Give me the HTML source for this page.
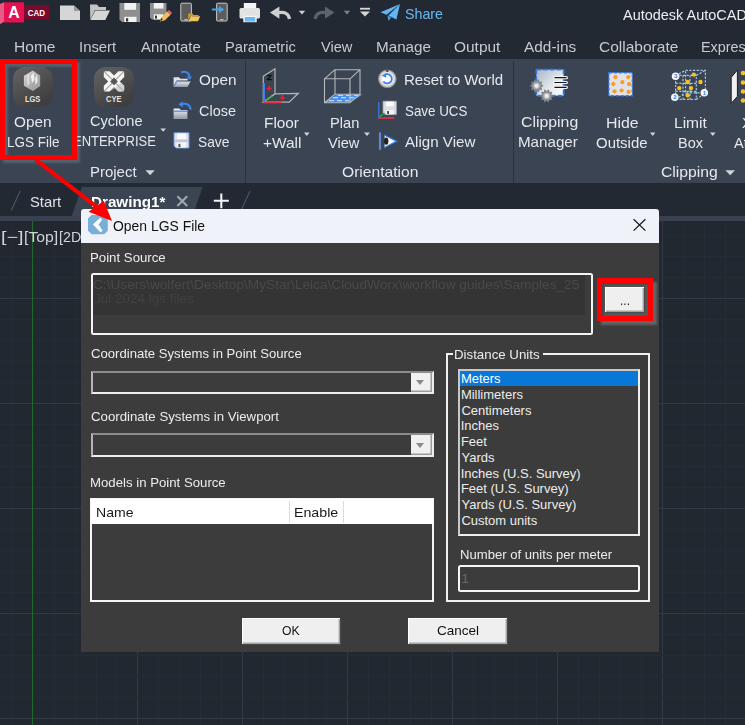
<!DOCTYPE html>
<html><head><meta charset="utf-8"><title>Open LGS File</title>
<style>
*{box-sizing:border-box;margin:0;padding:0}
html,body{width:745px;height:725px;overflow:hidden;background:#212830;font-family:"Liberation Sans",sans-serif}
#root{position:relative;width:745px;height:725px;overflow:hidden;background:#212830}
.abs{position:absolute}
.t{position:absolute;white-space:nowrap;line-height:1;transform-origin:0 0}
svg{position:absolute;left:0;top:0;overflow:visible}
.lab{font-size:13px;color:#ececec}
.btn{position:absolute;background:#efefef;box-shadow:inset 1px 1px 0 #fff, inset -1.4px -1.4px 0 #a4a4a4, 1px 1px 0 #4a4a4a}
</style></head><body><div id="root">

<!-- drawing canvas -->
<div class="abs" style="left:0;top:221px;width:745px;height:504px;background:#212830"></div>
<div class="abs" style="left:12px;top:221px;width:1px;height:504px;background:#252c36"></div>
<div class="abs" style="left:54px;top:221px;width:1px;height:504px;background:#252c36"></div>
<div class="abs" style="left:75px;top:221px;width:1px;height:504px;background:#252c36"></div>
<div class="abs" style="left:96px;top:221px;width:1px;height:504px;background:#252c36"></div>
<div class="abs" style="left:116px;top:221px;width:1px;height:504px;background:#252c36"></div>
<div class="abs" style="left:137px;top:221px;width:1px;height:504px;background:#323a47"></div>
<div class="abs" style="left:158px;top:221px;width:1px;height:504px;background:#252c36"></div>
<div class="abs" style="left:179px;top:221px;width:1px;height:504px;background:#252c36"></div>
<div class="abs" style="left:200px;top:221px;width:1px;height:504px;background:#252c36"></div>
<div class="abs" style="left:221px;top:221px;width:1px;height:504px;background:#252c36"></div>
<div class="abs" style="left:242px;top:221px;width:1px;height:504px;background:#323a47"></div>
<div class="abs" style="left:263px;top:221px;width:1px;height:504px;background:#252c36"></div>
<div class="abs" style="left:284px;top:221px;width:1px;height:504px;background:#252c36"></div>
<div class="abs" style="left:305px;top:221px;width:1px;height:504px;background:#252c36"></div>
<div class="abs" style="left:326px;top:221px;width:1px;height:504px;background:#252c36"></div>
<div class="abs" style="left:347px;top:221px;width:1px;height:504px;background:#323a47"></div>
<div class="abs" style="left:368px;top:221px;width:1px;height:504px;background:#252c36"></div>
<div class="abs" style="left:389px;top:221px;width:1px;height:504px;background:#252c36"></div>
<div class="abs" style="left:410px;top:221px;width:1px;height:504px;background:#252c36"></div>
<div class="abs" style="left:431px;top:221px;width:1px;height:504px;background:#252c36"></div>
<div class="abs" style="left:452px;top:221px;width:1px;height:504px;background:#323a47"></div>
<div class="abs" style="left:473px;top:221px;width:1px;height:504px;background:#252c36"></div>
<div class="abs" style="left:494px;top:221px;width:1px;height:504px;background:#252c36"></div>
<div class="abs" style="left:515px;top:221px;width:1px;height:504px;background:#252c36"></div>
<div class="abs" style="left:536px;top:221px;width:1px;height:504px;background:#252c36"></div>
<div class="abs" style="left:557px;top:221px;width:1px;height:504px;background:#323a47"></div>
<div class="abs" style="left:578px;top:221px;width:1px;height:504px;background:#252c36"></div>
<div class="abs" style="left:599px;top:221px;width:1px;height:504px;background:#252c36"></div>
<div class="abs" style="left:620px;top:221px;width:1px;height:504px;background:#252c36"></div>
<div class="abs" style="left:641px;top:221px;width:1px;height:504px;background:#252c36"></div>
<div class="abs" style="left:662px;top:221px;width:1px;height:504px;background:#323a47"></div>
<div class="abs" style="left:683px;top:221px;width:1px;height:504px;background:#252c36"></div>
<div class="abs" style="left:704px;top:221px;width:1px;height:504px;background:#252c36"></div>
<div class="abs" style="left:725px;top:221px;width:1px;height:504px;background:#252c36"></div>
<div class="abs" style="left:0;top:235px;width:745px;height:1px;background:#252c36"></div>
<div class="abs" style="left:0;top:256px;width:745px;height:1px;background:#252c36"></div>
<div class="abs" style="left:0;top:277px;width:745px;height:1px;background:#252c36"></div>
<div class="abs" style="left:0;top:298px;width:745px;height:1px;background:#323a47"></div>
<div class="abs" style="left:0;top:319px;width:745px;height:1px;background:#252c36"></div>
<div class="abs" style="left:0;top:340px;width:745px;height:1px;background:#252c36"></div>
<div class="abs" style="left:0;top:361px;width:745px;height:1px;background:#252c36"></div>
<div class="abs" style="left:0;top:382px;width:745px;height:1px;background:#252c36"></div>
<div class="abs" style="left:0;top:403px;width:745px;height:1px;background:#323a47"></div>
<div class="abs" style="left:0;top:424px;width:745px;height:1px;background:#252c36"></div>
<div class="abs" style="left:0;top:445px;width:745px;height:1px;background:#252c36"></div>
<div class="abs" style="left:0;top:466px;width:745px;height:1px;background:#252c36"></div>
<div class="abs" style="left:0;top:487px;width:745px;height:1px;background:#252c36"></div>
<div class="abs" style="left:0;top:508px;width:745px;height:1px;background:#323a47"></div>
<div class="abs" style="left:0;top:529px;width:745px;height:1px;background:#252c36"></div>
<div class="abs" style="left:0;top:550px;width:745px;height:1px;background:#252c36"></div>
<div class="abs" style="left:0;top:571px;width:745px;height:1px;background:#252c36"></div>
<div class="abs" style="left:0;top:592px;width:745px;height:1px;background:#252c36"></div>
<div class="abs" style="left:0;top:613px;width:745px;height:1px;background:#323a47"></div>
<div class="abs" style="left:0;top:634px;width:745px;height:1px;background:#252c36"></div>
<div class="abs" style="left:0;top:655px;width:745px;height:1px;background:#252c36"></div>
<div class="abs" style="left:0;top:676px;width:745px;height:1px;background:#252c36"></div>
<div class="abs" style="left:0;top:697px;width:745px;height:1px;background:#252c36"></div>
<div class="abs" style="left:0;top:718px;width:745px;height:1px;background:#323a47"></div>
<div class="abs" style="left:32px;top:221px;width:1px;height:504px;background:#1f6a2b"></div>

<!-- title + menu bar -->
<div class="abs" style="left:0;top:0;width:745px;height:59px;background:#222933"></div>
<!-- ribbon -->
<div class="abs" style="left:0;top:59px;width:745px;height:123.8px;background:#3b4453"></div>
<div class="abs" style="left:0;top:183px;width:745px;height:4px;background:#222933"></div>
<div class="abs" style="left:0;top:187px;width:745px;height:29px;background:#222933"></div>
<div class="abs" style="left:0;top:216px;width:745px;height:5px;background:#394150"></div>
<div class="abs" style="left:245px;top:61px;width:1px;height:122px;background:#2a313c"></div>
<div class="abs" style="left:513px;top:61px;width:1px;height:122px;background:#2a313c"></div>

<svg width="745" height="725" viewBox="0 0 745 725">
<defs>
<linearGradient id="gApp" x1="0" y1="0" x2="0.6" y2="1"><stop offset="0" stop-color="#646464"/><stop offset="1" stop-color="#3e3e3e"/></linearGradient>
<linearGradient id="gCube" x1="0" y1="0" x2="1" y2="1"><stop offset="0" stop-color="#dcdcdc"/><stop offset="1" stop-color="#8c8c8c"/></linearGradient>
<linearGradient id="gFold" x1="0" y1="0" x2="0" y2="1"><stop offset="0" stop-color="#f4f6f8"/><stop offset="1" stop-color="#8d98a8"/></linearGradient>
<linearGradient id="gClip" x1="0" y1="0" x2="1" y2="1"><stop offset="0" stop-color="#a9b6c4"/><stop offset="0.6" stop-color="#e4e9ee"/><stop offset="1" stop-color="#ffffff"/></linearGradient>
<radialGradient id="gRing" cx="0.5" cy="0.5" r="0.5"><stop offset="0.45" stop-color="#ffffff"/><stop offset="0.8" stop-color="#d6d6d6"/><stop offset="1" stop-color="#a8a8a8"/></radialGradient>
<filter id="soft" x="-10%" y="-10%" width="120%" height="120%"><feGaussianBlur stdDeviation="0.35"/></filter>
</defs>
<polygon points="0,4 4,2.3 4,21.8 0,24.2" fill="#e85a88"/>
<rect x="4" y="2.3" width="20" height="20.2" fill="#e5104f"/>
<rect x="24" y="5" width="25" height="14.7" fill="#780a2c"/>
<text x="14" y="17.9" font-family="Liberation Sans, sans-serif" font-weight="bold" font-size="15.8" fill="#fff" text-anchor="middle">A</text>
<text x="36.4" y="15.7" font-family="Liberation Sans, sans-serif" font-weight="bold" font-size="8.9" fill="#fff" text-anchor="middle" textLength="17.2" lengthAdjust="spacingAndGlyphs">CAD</text>
<polygon points="60,5.5 74,5.5 80,11 80,20 60,20" fill="#d6d6d6"/><polygon points="74,5.5 74,11 80,11" fill="#9a9a9a"/>
<polygon points="90,4.5 97,4.5 99,7 106,7 106,10 95,10 90.3,19.5" fill="#c4c4c4"/><polygon points="95.3,10.5 110,10.5 105.3,20 90.3,20" fill="#d6d6d6"/>
<path d="M119.5 3H140V22H122L119.5 19.5Z" fill="#8f8f8f"/><rect x="124.3" y="3" width="11.8" height="6.8" fill="#f2f2f2"/><rect x="124.3" y="16.8" width="12.2" height="5.2" fill="#f2f2f2"/><rect x="126" y="18.2" width="2.2" height="3.3" fill="#333"/>
<path d="M150 3H166.5V19.5H152L150 17.5Z" fill="#8f8f8f"/><rect x="153.8" y="3" width="9.7" height="5.6" fill="#f2f2f2"/><rect x="153.8" y="14.3" width="9.5" height="5.2" fill="#f2f2f2"/><rect x="155" y="15.6" width="2" height="3" fill="#333"/>
<polygon points="160,21.6 161.2,17.6 167.2,11.6 170.6,14.8 164.4,20.6" fill="#f0c060"/><polygon points="167.2,11.6 169,9.9 172,12.8 170.6,14.8" fill="#ee6070"/><polygon points="160,21.6 161.2,17.6 163,19.8" fill="#444"/>
<rect x="180.8" y="3.2" width="10.6" height="17.8" rx="1" fill="#5c5c5c" stroke="#c9c9c9" stroke-width="1"/><rect x="184.5" y="19.2" width="3" height="1" fill="#ddd"/>
<polygon points="188.2,13.5 192.5,13.5 193.5,15 198.5,15 198.5,16 190.5,16 188.2,20.5" fill="#c89a30"/><polygon points="191,16.2 200.2,16.2 198,21.2 188.5,21.2" fill="#f2c45a"/>
<rect x="216.6" y="3.2" width="10.6" height="17.8" rx="1" fill="#5c5c5c" stroke="#c9c9c9" stroke-width="1"/><rect x="220.3" y="19.2" width="3" height="1" fill="#ddd"/>
<path d="M211.8 8.6H219V6L224.2 9.6L219 13.2V10.6H211.8Z" fill="#3ea4ee"/>
<rect x="243.8" y="3" width="12.4" height="6" fill="#f4f4f4"/><rect x="239.5" y="8" width="20.5" height="10.5" rx="1.5" fill="#e2e2e2"/><rect x="243.3" y="15.8" width="13.4" height="6.4" fill="#f4f4f4"/><rect x="244.8" y="17" width="10.4" height="4.6" fill="#6bb8f2"/>
<polygon points="270,12.6 279.4,6.4 279.4,18.8" fill="#cfcfcf"/><path d="M279 12.6 C285 11.6 289 14 289.4 19" stroke="#cfcfcf" stroke-width="3.2" fill="none"/>
<polygon points="298.8,10.8 305.2,10.8 302,14.4" fill="#cfcfcf"/>
<polygon points="334.4,12.6 325,6.4 325,18.8" fill="#5c636d"/><path d="M325.4 12.6 C319.4 11.6 315.6 14 315.2 19" stroke="#5c636d" stroke-width="3.2" fill="none"/>
<polygon points="343.8,10.8 350.2,10.8 347,14.4" fill="#7d838c"/>
<rect x="360" y="7.8" width="10" height="1.8" fill="#d6d6d6"/><polygon points="360,11.4 370,11.4 365,16.6" fill="#d6d6d6"/>
<polygon points="380.5,12.2 400,4 386.6,14.8" fill="#62b5f5"/><polygon points="400,4 388.4,15.6 396.4,19.4" fill="#62b5f5"/><polygon points="387.4,15.6 388.6,21 391.2,17.2" fill="#4a9be0"/>
<rect x="13" y="67" width="40" height="40" rx="12" fill="url(#gApp)"/>
<g filter="url(#soft)"><polygon points="32.8,70.6 40.1,75.4 40.1,86.1 32.8,91 23.9,85.8 23.9,75.8" fill="url(#gCube)"/></g>
<g filter="url(#soft)"><polygon points="32.8,79.5 40.1,75.4 40.1,86.1 32.8,91" fill="#a8a8a8" opacity=".75"/><polygon points="31,76 33.5,72.5 34.5,80 32,83" fill="#fff" opacity=".8"/><polygon points="35,78 37.2,74.8 37.6,82 35.4,85" fill="#fff" opacity=".75"/><polygon points="27,76 29,73.4 29.6,84 27.4,86" fill="#eee" opacity=".6"/></g>
<text x="32.6" y="101.9" font-family="Liberation Sans, sans-serif" font-weight="bold" font-size="8.5" fill="#e4e4e4" text-anchor="middle" textLength="15.4" lengthAdjust="spacingAndGlyphs">LGS</text>
<rect x="94" y="67" width="40" height="40" rx="12" fill="url(#gApp)"/>
<g filter="url(#soft)"><path d="M105.3 71.2H109.6L114 75.6L118.4 71.2H122.7Q124.2 71.2 124.2 72.7V77L119.8 81.4L124.2 85.8V90.1Q124.2 91.6 122.7 91.6H118.4L114 87.2L109.6 91.6H105.3Q103.8 91.6 103.8 90.1V85.8L108.2 81.4L103.8 77V72.7Q103.8 71.2 105.3 71.2Z" fill="#f4f4f4"/>
<path d="M104.4 71.8L123.6 91M123.6 71.8L104.4 91" stroke="#6a6a6a" stroke-width="0.9"/><polygon points="114,77.6 117.8,81.4 114,85.2 110.2,81.4" fill="#575757"/>
<polygon points="109.6,91.6 114,87.2 118.4,91.6 122.7,91.6 124.2,90.1 124.2,85.8 121,82.6 114,89 " fill="#b9b9b9" opacity=".55"/></g>
<text x="113.7" y="101.9" font-family="Liberation Sans, sans-serif" font-weight="bold" font-size="8.5" fill="#e4e4e4" text-anchor="middle" textLength="15.4" lengthAdjust="spacingAndGlyphs">CYE</text>
<polygon points="173.6,77.2 179,77.2 180.4,78.8 187.6,78.8 187.6,80.6 176.4,80.6 173.6,86.6" fill="#dfe3e8"/><polygon points="176.6,81 190.6,81 187.6,87 173.6,87" fill="url(#gFold)"/><path d="M174.2 86.2L177 81.6H190" stroke="#4a88e0" stroke-width="0.9" fill="none"/>
<path d="M181 72.4C185.5 70.6 189.2 72.6 189.4 76.6" stroke="#3d86ee" stroke-width="2" fill="none"/><polygon points="186.4,76.4 192.2,76.4 189.4,80" fill="#3d86ee"/>
<polygon points="173.6,108.4 179.4,108.4 180.8,110 187.4,110 187.4,119 173.6,119" fill="url(#gFold)"/><rect x="173.6" y="110.6" width="13.8" height="1.2" fill="#4a88e0"/>
<path d="M190.6 109.6C190.2 104.6 186 102.6 181.4 104.2" stroke="#3d86ee" stroke-width="2" fill="none"/><polygon points="182.8,101 182.8,107.6 178.4,104.6" fill="#3d86ee"/>
<path d="M174 132.8H189V148H176L174 146Z" fill="#dfe4ec" stroke="#6f93d6" stroke-width="1"/><rect x="177.2" y="133.4" width="8.8" height="5.6" fill="#fbfbfb"/><rect x="177" y="142.6" width="9" height="5" fill="#f6f6f6"/><rect x="178.4" y="143.8" width="2" height="3.4" fill="#555"/><rect x="175" y="139.6" width="13" height="2.4" fill="#c3c9d4"/>
<polygon points="263.3,76.3 275,68.8 275,93.8 263.3,102.2" fill="none" stroke="#b4b4b4" stroke-width="1.2"/><polygon points="275,93.8 298.3,93.3 289.2,102.2 263.3,102.2" fill="none" stroke="#b4b4b4" stroke-width="1.2"/>
<line x1="264.1" y1="83" x2="264.1" y2="102.2" stroke="#3b7df0" stroke-width="1.8"/><line x1="263.3" y1="102.5" x2="281.7" y2="102.5" stroke="#e8323c" stroke-width="1.7"/><line x1="265.4" y1="100.8" x2="272.5" y2="96" stroke="#2db34a" stroke-width="1.5"/>
<path d="M266.6 88.5H271.8M269.2 85.9V91.1M279.9 97.7H285.1M282.5 95.1V100.3" stroke="#ee1c2e" stroke-width="1.5"/>
<text x="266.8" y="79.8" font-family="Liberation Sans, sans-serif" font-weight="bold" font-size="8" fill="#0c0c0c" stroke="#0c0c0c" stroke-width="0.45">Z</text>
<polygon points="324.3,102.6 350,102.6 362.6,94.6 337,94.6" fill="#4790f2"/>
<path d="M329 100.6H334M337 100.6H342M345 100.6H349M333 97.6H338M341 97.6H346M349 97.6H354M338 95.4H343M346 95.4H351M354 95.4H358" stroke="#b4d6ff" stroke-width="1.1"/>
<path d="M324.5 78.8H350V102.7H324.5ZM335 69.7H360V94.3H335ZM324.5 78.8L335 69.7M350 78.8L360 69.7M350 102.7L360 94.3M324.5 102.7L335 94.3" fill="none" stroke="#b6b8bc" stroke-width="1.1"/>
<circle cx="387.3" cy="78.8" r="9" fill="url(#gRing)"/><circle cx="387.3" cy="78.8" r="8.8" fill="none" stroke="#8e8e8e" stroke-width="0.8"/><rect x="386.3" y="69.6" width="2" height="2.4" fill="#444"/>
<path d="M384.3 75.2A4.6 4.6 0 1 1 383.4 81.4" stroke="#3b82f0" stroke-width="1.8" fill="none"/><polygon points="381.6,75.4 386.4,73.2 386,77.8" fill="#3b82f0"/>
<path d="M383 101.2H396.4V114.6H385L383 112.6Z" fill="#d9dde4" stroke="#9aa2ae" stroke-width="0.8"/><rect x="386" y="101.6" width="7.6" height="4.8" fill="#fafafa"/><rect x="386" y="110" width="7.8" height="4.4" fill="#f4f4f4"/><rect x="387.2" y="111" width="1.8" height="3" fill="#444"/>
<line x1="378.8" y1="102" x2="378.8" y2="118.4" stroke="#3b7df0" stroke-width="1.2"/><line x1="378.4" y1="118" x2="394.4" y2="118" stroke="#e8323c" stroke-width="1.6"/><line x1="379.4" y1="117" x2="384.4" y2="113" stroke="#2db34a" stroke-width="1.2"/>
<line x1="380" y1="132.4" x2="380" y2="149.8" stroke="#5f88cc" stroke-width="2.2"/><polygon points="384.6,135.4 396.4,141.2 384.6,147.4" fill="#fbfbfb"/><path d="M384 134.8L396.6 141.2L384 147.8" stroke="#2f7cf0" stroke-width="1.2" fill="none"/><ellipse cx="386.2" cy="141.2" rx="2.2" ry="3.6" fill="#222"/>
<rect x="536.4" y="69.6" width="27.2" height="26" fill="url(#gClip)" stroke="#2f7cf0" stroke-width="1.8" stroke-dasharray="4.4 2.4"/>
<path d="M554.6 77.7H566.4M554.6 82.5H566.4M554.6 87.3H566.4" stroke="#f4f4f4" stroke-width="3.2" stroke-linecap="round"/><path d="M554.4 77.7H566.6M554.4 82.5H566.6M554.4 87.3H566.6" stroke="#161616" stroke-width="1.2"/>
<g filter="url(#soft)"><polygon points="543.60,85.80 541.26,87.31 542.26,89.91 539.48,89.76 538.76,92.46 536.60,90.70 534.44,92.46 533.72,89.76 530.94,89.91 531.94,87.31 529.60,85.80 531.94,84.29 530.94,81.69 533.72,81.84 534.44,79.14 536.60,80.90 538.76,79.14 539.48,81.84 542.26,81.69 541.26,84.29" fill="#7e8084"/><circle cx="536.6" cy="85.8" r="4.6" fill="#8e9094"/><circle cx="536.6" cy="85.8" r="3.2" fill="#b4b6b8"/><circle cx="536.6" cy="85.8" r="2.1" fill="#ececec"/></g>
<g filter="url(#soft)"><polygon points="553.70,95.90 551.36,97.41 552.36,100.01 549.58,99.86 548.86,102.56 546.70,100.80 544.54,102.56 543.82,99.86 541.04,100.01 542.04,97.41 539.70,95.90 542.04,94.39 541.04,91.79 543.82,91.94 544.54,89.24 546.70,91.00 548.86,89.24 549.58,91.94 552.36,91.79 551.36,94.39" fill="#7e8084"/><circle cx="546.7" cy="95.9" r="4.6" fill="#8e9094"/><circle cx="546.7" cy="95.9" r="3.2" fill="#b4b6b8"/><circle cx="546.7" cy="95.9" r="2.1" fill="#ececec"/></g>
<rect x="608.9" y="72.7" width="23.4" height="23" fill="#dfe2ea" stroke="#2f7cf0" stroke-width="1.4" stroke-dasharray="3 2"/>
<circle cx="615.5" cy="77.1" r="2.1" fill="#ff9a1a"/>
<circle cx="628.3" cy="77.1" r="2.1" fill="#ff9a1a"/>
<circle cx="613.3" cy="84.1" r="2.1" fill="#ff9a1a"/>
<circle cx="622.4" cy="82.1" r="2.1" fill="#ff9a1a"/>
<circle cx="629.1" cy="84.1" r="2.1" fill="#ff9a1a"/>
<circle cx="614.5" cy="91.3" r="2.1" fill="#ff9a1a"/>
<circle cx="621.6" cy="90.5" r="2.1" fill="#ff9a1a"/>
<circle cx="628.6" cy="91.8" r="2.1" fill="#ff9a1a"/>
<path d="M675.6 75.4H696.3V99.4H675.6ZM685.6 70.4H705.4V92.8H685.6ZM675.6 75.4L685.6 70.4M696.3 75.4L705.4 70.4M696.3 99.4L705.4 92.8M675.6 99.4L685.6 92.8M683 75.4V99.4M690 75.4V99.4M675.6 83.4H696.3M675.6 91.4H696.3" fill="none" stroke="#a4c6e8" stroke-width="1.2" stroke-dasharray="2.2 1.5"/>
<circle cx="693.8" cy="74.6" r="2.2" fill="#f6c21e"/>
<circle cx="687.7" cy="82.0" r="2.2" fill="#f6c21e"/>
<circle cx="700.5" cy="82.0" r="2.2" fill="#f6c21e"/>
<circle cx="679.3" cy="88.1" r="2.2" fill="#f6c21e"/>
<circle cx="691.0" cy="88.1" r="2.2" fill="#f6c21e"/>
<circle cx="687.7" cy="95.3" r="2.2" fill="#f6c21e"/>
<circle cx="675.6" cy="76.2" r="3.8" fill="#f4f6fa"/><text x="675.6" y="78.4" font-family="Liberation Sans, sans-serif" font-weight="bold" font-size="6" fill="#2f7cf0" text-anchor="middle">3</text>
<circle cx="674.8" cy="97.2" r="3.8" fill="#f4f6fa"/><text x="674.8" y="99.4" font-family="Liberation Sans, sans-serif" font-weight="bold" font-size="6" fill="#2f7cf0" text-anchor="middle">2</text>
<circle cx="704.3" cy="92.8" r="3.8" fill="#f4f6fa"/><text x="704.3" y="95.0" font-family="Liberation Sans, sans-serif" font-weight="bold" font-size="6" fill="#2f7cf0" text-anchor="middle">1</text>
<polygon points="731.2,77.4 737.4,70 737.4,96.4 731.2,103.4" fill="#f0f0f2" stroke="#1c1c1c" stroke-width="1"/>
<circle cx="743" cy="73" r="2.3" fill="#f6c21e"/>
<circle cx="743" cy="82.5" r="2.3" fill="#f6c21e"/>
<circle cx="743" cy="91.5" r="2.3" fill="#f6c21e"/>
<circle cx="743" cy="100.5" r="2.3" fill="#f6c21e"/>
<polygon points="160.3,128.4 166,128.4 163.15,131.8" fill="#d0d3d8"/>
<polygon points="304,132.6 309.6,132.6 306.8,136" fill="#d0d3d8"/>
<polygon points="364,132.6 370,132.6 367.0,136" fill="#d0d3d8"/>
<polygon points="650,132.6 655.4,132.6 652.7,136" fill="#d0d3d8"/>
<polygon points="710,132.6 715.6,132.6 712.8,136" fill="#d0d3d8"/>
<polygon points="145.4,170.2 154.8,170.2 150.10000000000002,175.2" fill="#d0d3d8"/>
<polygon points="725.4,170.2 735,170.2 730.2,175.2" fill="#d0d3d8"/>
<polygon points="81.8,187 202.6,187 192.6,216 71.8,216" fill="#3b4453"/>
<line x1="20.2" y1="191" x2="11.2" y2="210.6" stroke="#4a5363" stroke-width="1.2"/>
<line x1="250" y1="191" x2="241" y2="210.6" stroke="#4a5363" stroke-width="1.2"/>
<path d="M177.4 196.2L187.2 206M187.2 196.2L177.4 206" stroke="#a2a7af" stroke-width="2.1"/>
<path d="M213.8 200.8H228.8M221.3 193.4V208.2" stroke="#f2f3f5" stroke-width="2.1"/>
</svg>

<div class="t" style="left:405.29px;top:6px;font-size:15px;color:#6ab8f2;transform:scaleX(0.9481);">Share</div>
<div class="t" style="left:622.80px;top:7px;font-size:15px;color:#eceef1;transform:scaleX(0.9644);">Autodesk AutoCAD 2024</div>
<div class="t" style="left:13.70px;top:39px;font-size:15px;color:#c6cad1;transform:scaleX(1.0368);">Home</div>
<div class="t" style="left:79.04px;top:39px;font-size:15px;color:#c6cad1;transform:scaleX(0.9917);">Insert</div>
<div class="t" style="left:140.60px;top:39px;font-size:15px;color:#c6cad1;transform:scaleX(0.9954);">Annotate</div>
<div class="t" style="left:225.48px;top:39px;font-size:15px;color:#c6cad1;transform:scaleX(0.9764);">Parametric</div>
<div class="t" style="left:320.68px;top:39px;font-size:15px;color:#c6cad1;transform:scaleX(0.9712);">View</div>
<div class="t" style="left:375.73px;top:39px;font-size:15px;color:#c6cad1;transform:scaleX(1.0144);">Manage</div>
<div class="t" style="left:453.63px;top:39px;font-size:15px;color:#c6cad1;transform:scaleX(1.0289);">Output</div>
<div class="t" style="left:524.30px;top:39px;font-size:15px;color:#c6cad1;transform:scaleX(1.0263);">Add-ins</div>
<div class="t" style="left:599.42px;top:39px;font-size:15px;color:#c6cad1;transform:scaleX(1.0339);">Collaborate</div>
<div class="t" style="left:701.10px;top:39px;font-size:15px;color:#c6cad1;transform:scaleX(0.9582);">Express Tools</div>
<div class="t" style="left:14.33px;top:114px;font-size:15px;color:#e6e8ec;transform:scaleX(1.0229);">Open</div>
<div class="t" style="left:6.68px;top:134px;font-size:15px;color:#e6e8ec;transform:scaleX(0.8993);">LGS File</div>
<div class="t" style="left:89.87px;top:113px;font-size:15px;color:#e6e8ec;transform:scaleX(0.9687);">Cyclone</div>
<div class="t" style="left:73.42px;top:133px;font-size:15px;color:#e6e8ec;transform:scaleX(0.8649);">ENTERPRISE</div>
<div class="t" style="left:198.54px;top:72px;font-size:15px;color:#e6e8ec;transform:scaleX(1.0200);">Open</div>
<div class="t" style="left:198.58px;top:103px;font-size:15px;color:#e6e8ec;transform:scaleX(0.9627);">Close</div>
<div class="t" style="left:198.01px;top:134px;font-size:15px;color:#e6e8ec;transform:scaleX(0.9191);">Save</div>
<div class="t" style="left:90.35px;top:164px;font-size:15px;color:#e6e8ec;transform:scaleX(0.9967);">Project</div>
<div class="t" style="left:264.42px;top:115px;font-size:15px;color:#e6e8ec;transform:scaleX(1.0238);">Floor</div>
<div class="t" style="left:263.33px;top:135px;font-size:15px;color:#e6e8ec;transform:scaleX(1.0274);">+Wall</div>
<div class="t" style="left:329.58px;top:115px;font-size:15px;color:#e6e8ec;transform:scaleX(0.9766);">Plan</div>
<div class="t" style="left:328.48px;top:135px;font-size:15px;color:#e6e8ec;transform:scaleX(0.9712);">View</div>
<div class="t" style="left:404.45px;top:72px;font-size:15px;color:#e6e8ec;transform:scaleX(1.0026);">Reset to World</div>
<div class="t" style="left:404.63px;top:103px;font-size:15px;color:#e6e8ec;transform:scaleX(0.8918);">Save UCS</div>
<div class="t" style="left:404.50px;top:134px;font-size:15px;color:#e6e8ec;transform:scaleX(1.0079);">Align View</div>
<div class="t" style="left:341.72px;top:164px;font-size:15px;color:#e6e8ec;transform:scaleX(1.0401);">Orientation</div>
<div class="t" style="left:520.51px;top:114px;font-size:15px;color:#e6e8ec;transform:scaleX(1.0552);">Clipping</div>
<div class="t" style="left:518.44px;top:134px;font-size:15px;color:#e6e8ec;transform:scaleX(1.0095);">Manager</div>
<div class="t" style="left:605.58px;top:115px;font-size:15px;color:#e6e8ec;transform:scaleX(1.0597);">Hide</div>
<div class="t" style="left:595.85px;top:135px;font-size:15px;color:#e6e8ec;transform:scaleX(0.9970);">Outside</div>
<div class="t" style="left:673.70px;top:115px;font-size:15px;color:#e6e8ec;transform:scaleX(1.0380);">Limit</div>
<div class="t" style="left:677.79px;top:135px;font-size:15px;color:#e6e8ec;transform:scaleX(0.9682);">Box</div>
<div class="t" style="left:660.71px;top:164px;font-size:15px;color:#e6e8ec;transform:scaleX(1.0476);">Clipping</div>
<div class="t" style="left:742.32px;top:115px;font-size:15px;color:#e6e8ec;transform:scaleX(1.0054);">X</div>
<div class="t" style="left:734.40px;top:135px;font-size:15px;color:#e6e8ec;transform:scaleX(0.9714);">Attach</div>
<div class="t" style="left:29.76px;top:194px;font-size:15px;color:#dfe2e6;transform:scaleX(0.9854);">Start</div>
<div class="t" style="left:91.39px;top:194px;font-size:15px;color:#ffffff;font-weight:bold;transform:scaleX(1.0145);">Drawing1*</div>
<div class="t" style="left:1.33px;top:230px;font-size:14.5px;color:#d0d3d8;transform:scaleX(1.3655);">[−]</div>
<div class="t" style="left:23.91px;top:230px;font-size:14.5px;color:#d0d3d8;transform:scaleX(1.0894);">[Top]</div>
<div class="t" style="left:58.52px;top:230px;font-size:14.5px;color:#d0d3d8;transform:scaleX(0.9820);">[2D Wireframe]</div>

<!-- red highlight on Open LGS File -->
<div class="abs" style="left:3px;top:62px;width:77px;height:101px;border:5px solid rgba(160,166,178,.28);filter:blur(0.8px)"></div>
<div class="abs" style="left:0px;top:59px;width:77px;height:101px;border:5px solid #fe0000"></div>

<!-- dialog -->
<div class="abs" style="left:81px;top:209px;width:578px;height:442.5px;background:#3c3c3c;border-radius:3px 3px 0 0;overflow:hidden">
  <div class="abs" style="left:0;top:0;width:578px;height:33.5px;background:#eff2f9"></div>
</div>
<div class="t" style="left:113.30px;top:218px;font-size:15px;color:#111;transform:scaleX(0.9279);">Open LGS File</div>
<div class="t" style="left:90.36px;top:251px;font-size:13px;color:#ececec;transform:scaleX(1.0172);">Point Source</div>
<div class="abs" style="left:91px;top:273px;width:501.6px;height:61.5px;border:2.2px solid #f4f4f4;border-radius:2.5px"></div>
<div class="abs" style="left:93px;top:275px;width:492px;height:39.5px;background:#343434"></div>
<div class="t" style="left:93.34px;top:278px;font-size:13px;color:#494949;transform:scaleX(1.0506);filter:blur(0.6px);">C:\Users\wolfert\Desktop\MyStar\Leica\CloudWorx\workflow guides\Samples_25</div>
<div class="t" style="left:93.74px;top:292px;font-size:13px;color:#414141;transform:scaleX(1.0380);filter:blur(0.7px);">Jul 2024 lgs files</div>
<div class="abs" style="left:600.5px;top:281.5px;width:56px;height:43px;background:rgba(125,125,125,.6);filter:blur(1.2px)"></div>
<div class="abs" style="left:597px;top:278px;width:56.2px;height:43.2px;border:5.3px solid #fe0000;background:#575757;box-shadow:inset 2px 2px 2px #4a4a4a"></div>
<div class="btn" style="left:605.4px;top:287px;width:38.8px;height:24.8px"></div>
<div class="t" style="left:619.97px;top:294px;font-size:13px;color:#222;transform:scaleX(0.9176);">...</div>
<div class="t" style="left:90.87px;top:347px;font-size:13px;color:#ececec;transform:scaleX(1.0090);">Coordinate Systems in Point Source</div>
<div class="abs" style="left:90.7px;top:370.5px;width:343.2px;height:23.5px;border:2px solid #ededed;border-top-color:#8c8c8c;border-left-color:#b4b4b4"></div>
<div class="abs" style="left:411px;top:372.5px;width:20.5px;height:19.5px;background:#f0f0f0;box-shadow:inset -1.5px -1.5px 0 #9c9c9c"></div>
<div class="abs" style="left:416.3px;top:380.3px;width:0;height:0;border-left:4.5px solid transparent;border-right:4.5px solid transparent;border-top:5.4px solid #8a8a8a"></div>
<div class="abs" style="left:90.7px;top:433.2px;width:343.2px;height:23.5px;border:2px solid #ededed;border-top-color:#8c8c8c;border-left-color:#b4b4b4"></div>
<div class="abs" style="left:411px;top:435.2px;width:20.5px;height:19.5px;background:#f0f0f0;box-shadow:inset -1.5px -1.5px 0 #9c9c9c"></div>
<div class="abs" style="left:416.3px;top:443.0px;width:0;height:0;border-left:4.5px solid transparent;border-right:4.5px solid transparent;border-top:5.4px solid #8a8a8a"></div>
<div class="t" style="left:90.86px;top:410px;font-size:13px;color:#ececec;transform:scaleX(1.0174);">Coordinate Systems in Viewport</div>
<div class="t" style="left:90.36px;top:476px;font-size:13px;color:#ececec;transform:scaleX(1.0152);">Models in Point Source</div>
<div class="abs" style="left:89.7px;top:498.4px;width:344px;height:103.2px;border:2.5px solid #f6f6f6"></div>
<div class="abs" style="left:91px;top:499.4px;width:341.5px;height:24.2px;background:#fff"></div>
<div class="abs" style="left:288.5px;top:501px;width:1px;height:22px;background:#dcdcdc"></div>
<div class="abs" style="left:343px;top:501px;width:1px;height:22px;background:#dcdcdc"></div>
<div class="t" style="left:96.18px;top:506px;font-size:13px;color:#1a1a1a;transform:scaleX(1.0818);">Name</div>
<div class="t" style="left:293.77px;top:506px;font-size:13px;color:#1a1a1a;transform:scaleX(1.0916);">Enable</div>
<div class="abs" style="left:446.2px;top:353px;width:204.2px;height:248.6px;border:2.5px solid #f0f0f0"></div>
<div class="abs" style="left:453px;top:350px;width:89.5px;height:9px;background:#3c3c3c"></div>
<div class="t" style="left:454.45px;top:348px;font-size:13px;color:#ececec;transform:scaleX(1.0216);">Distance Units</div>
<div class="abs" style="left:458px;top:369.3px;width:182px;height:167.2px;border:2px solid #efefef;border-top-color:#c8c8c8;border-left-color:#c8c8c8"></div>
<div class="abs" style="left:460px;top:371.4px;width:178.3px;height:15.1px;background:#0877d8"></div>
<div class="t" style="left:460.88px;top:372px;font-size:13px;color:#fff;transform:scaleX(1.0000);">Meters</div>
<div class="t" style="left:460.88px;top:388px;font-size:13px;color:#ececec;transform:scaleX(1.0000);">Millimeters</div>
<div class="t" style="left:461.38px;top:404px;font-size:13px;color:#ececec;transform:scaleX(1.0000);">Centimeters</div>
<div class="t" style="left:460.75px;top:419px;font-size:13px;color:#ececec;transform:scaleX(1.0000);">Inches</div>
<div class="t" style="left:460.88px;top:435px;font-size:13px;color:#ececec;transform:scaleX(1.0000);">Feet</div>
<div class="t" style="left:461.62px;top:451px;font-size:13px;color:#ececec;transform:scaleX(1.0000);">Yards</div>
<div class="t" style="left:460.75px;top:467px;font-size:13px;color:#ececec;transform:scaleX(1.0000);">Inches (U.S. Survey)</div>
<div class="t" style="left:460.88px;top:482px;font-size:13px;color:#ececec;transform:scaleX(1.0000);">Feet (U.S. Survey)</div>
<div class="t" style="left:461.62px;top:498px;font-size:13px;color:#ececec;transform:scaleX(1.0000);">Yards (U.S. Survey)</div>
<div class="t" style="left:461.38px;top:514px;font-size:13px;color:#ececec;transform:scaleX(1.0000);">Custom units</div>
<div class="t" style="left:460.47px;top:548px;font-size:13px;color:#ececec;transform:scaleX(1.0072);">Number of units per meter</div>
<div class="abs" style="left:458px;top:564.8px;width:182px;height:27px;border:2.5px solid #f6f6f6;border-radius:2.5px"></div>
<div class="t" style="left:461.60px;top:572px;font-size:13px;color:#6a6a6a;transform:scaleX(1.0000);">1</div>
<div class="btn" style="left:241.5px;top:617.5px;width:98.5px;height:26.5px"></div>
<div class="btn" style="left:408px;top:617.5px;width:98.5px;height:26.5px"></div>
<div class="t" style="left:282.01px;top:624px;font-size:13px;color:#111;transform:scaleX(0.9389);">OK</div>
<div class="t" style="left:436.85px;top:624px;font-size:13px;color:#111;transform:scaleX(1.0385);">Cancel</div>

<svg width="745" height="725" viewBox="0 0 745 725">
<polygon points="91.6,215 104.2,215 107.8,218.6 107.8,230.7 104.2,234.3 91.6,234.3 88,230.7 88,218.6" fill="#79aed6"/>
<polygon points="93.3,224.4 100.3,218.2 101.6,219.6 98.2,224.6 102,230.6 100.6,232 " fill="#fff" stroke="#fff" stroke-width="1" stroke-linejoin="round"/>
<path d="M633.6 219.2L645.4 230.6M645.4 219.2L633.6 230.6" stroke="#1c1c1c" stroke-width="1.3"/>
<line x1="35.6" y1="159.6" x2="98" y2="207.8" stroke="#fe0000" stroke-width="4"/>
<polygon points="112,221 103.8,200.8 88.6,211.8" fill="#fe0000"/>
</svg>
</div></body></html>
